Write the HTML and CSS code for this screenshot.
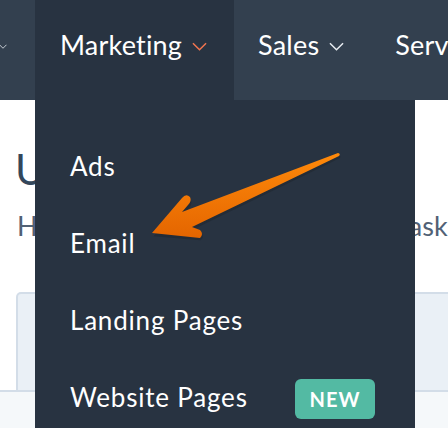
FILE: index.html
```html
<!DOCTYPE html>
<html lang="en">
<head>
    <meta charset="UTF-8">
    <meta name="viewport" content="width=device-width, initial-scale=1.0">
    <title>Marketing Menu</title>
    <link rel="stylesheet" href="styles.css">
</head>
<body>
    <header class="nav">
        <div class="nav-item nav-edge">
            <svg class="chevron" viewBox="0 0 16 9"><path d="M1 1 L8 8 L15 1"/></svg>
        </div>
        <div class="nav-item active">
            <span>Marketing</span>
            <svg class="chevron" viewBox="0 0 16 9"><path d="M1 1 L8 8 L15 1"/></svg>
        </div>
        <div class="nav-item">
            <span>Sales</span>
            <svg class="chevron" viewBox="0 0 16 9"><path d="M1 1 L8 8 L15 1"/></svg>
        </div>
        <div class="nav-item">
            <span>Service</span>
        </div>
    </header>

    <main class="page">
        <h1>Upgrade your tools</h1>
        <p class="subtitle"><span>Here's how</span><span>ask.</span></p>
        <div class="tabs"></div>
        <div class="panel"></div>
    </main>

    <!-- Marketing dropdown -->
    <div class="dropdown">
        <div class="drop-item">Ads</div>
        <div class="drop-item">Email</div>
        <div class="drop-item">Landing Pages</div>
        <div class="drop-item">Website Pages <span class="badge">NEW</span></div>
    </div>

    <!-- annotation arrow -->
    <svg class="annotation" viewBox="0 0 448 428">
        <defs>
            <linearGradient id="arrow-fill" x1="0" y1="0" x2="0" y2="1">
                <stop offset="0" stop-color="#ff8a0a"/>
                <stop offset="1" stop-color="#e46500"/>
            </linearGradient>
        </defs>
        <path d="M153 235 L183 200 Q186 195 190 199 Q192 202 189 206 L183 213 L338 154 Q341 155 339 157 L193 228 L201 232 Q204 236 200 239 L153 235 Z" fill="#1a1f26" opacity="0.35" transform="translate(0.6,1.2)"/>
        <path d="M152 233 L182 198 Q186 193 190 197 Q192 201 188 205 L182 212 L338 153 Q341 154 339 156 L192 227 L200 230 Q204 234 200 238 L152 233 Z" fill="url(#arrow-fill)"/>
    </svg>
</body>
</html>
```

FILE: styles.css
```css
body {
    margin: 0;
    width: 448px;
    height: 428px;
    overflow: hidden;
    position: relative;
    background-color: #fff;
    font-family: Lato, "Open Sans", sans-serif;
    font-variant-ligatures: none;
}

.nav {
    display: flex;
    height: 100px;
    background-color: #33404f;
    color: #fff;
    font-size: 27px;
    letter-spacing: 0.2px;
    white-space: nowrap;
}

.nav-item {
    display: flex;
    align-items: center;
    gap: 10px;
    padding: 0 27px 12px 24px;
}

.nav-edge {
    padding-left: 0;
    padding-right: 28px;
}

.nav-item.active {
    background-color: #283341;
    padding-left: 25px;
}

.chevron {
    width: 15px;
    height: 9px;
    margin-top: 4px;
    fill: none;
    stroke: #e8ecf1;
    stroke-width: 1.6;
}

.nav-edge .chevron {
    width: 8px;
    margin-left: -1px;
}

.active .chevron {
    stroke: #f2754f;
}

.page {
    padding: 44px 0 0 15px;
}

h1 {
    margin: 0;
    font-size: 42px;
    font-weight: 400;
    line-height: 1.2;
    color: #33475b;
    white-space: nowrap;
}

.subtitle {
    display: flex;
    justify-content: space-between;
    margin: 16px -6px 0 2px;
    font-size: 27px;
    line-height: 1.2;
    color: #516175;
}

.tabs {
    margin: 49px -20px 0 1px;
    height: 96px;
    background-color: #eaf0f6;
    border: 2px solid #d3dde8;
    border-bottom: none;
    border-radius: 5px 0 0 0;
}

.panel {
    margin-left: -15px;
    height: 60px;
    background-color: #f5f8fa;
    border-top: 2px solid #d3dde8;
}

.dropdown {
    position: absolute;
    top: 100px;
    left: 35px;
    width: 380px;
    height: 340px;
    padding-top: 27px;
    box-sizing: border-box;
    background-color: #283341;
    color: #fff;
    font-size: 26px;
    letter-spacing: 0.8px;
}

.drop-item {
    display: flex;
    align-items: center;
    height: 77px;
    padding: 0 40px 0 35px;
    white-space: nowrap;
}

.badge {
    margin-left: auto;
    margin-top: 5px;
    width: 80px;
    height: 40px;
    line-height: 40px;
    text-align: center;
    border-radius: 6px;
    background-color: #53baa3;
    font-size: 20px;
    font-weight: 700;
    letter-spacing: 1px;
}

.annotation {
    position: absolute;
    top: 0;
    left: 0;
    width: 448px;
    height: 428px;
    pointer-events: none;
}
```
